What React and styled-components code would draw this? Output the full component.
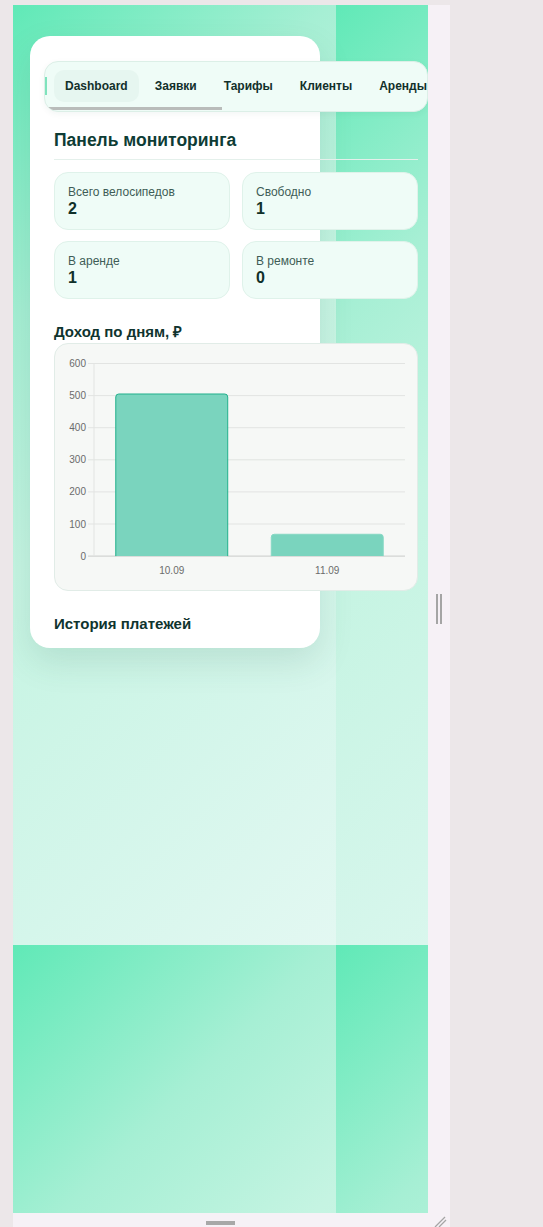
import * as React from 'react';
import styled, { createGlobalStyle } from 'styled-components';

const stats = [
    { label: 'Всего велосипедов', value: 2 },
    { label: 'Свободно', value: 1 },
    { label: 'В аренде', value: 1 },
    { label: 'В ремонте', value: 0 },
];

const tabs = ['Dashboard', 'Заявки', 'Тарифы', 'Клиенты', 'Аренды'];

const income = [
    { day: '10.09', sum: 505 },
    { day: '11.09', sum: 68 },
];

function IncomeChart() {
    const top = 19.5;
    const step = 32.1;
    const zero = top + step * 6;
    const left = 39;
    const right = 350;
    const slot = (right - left) / income.length;
    const barW = slot * 0.72;

    return (
        <svg width="362" height="246" viewBox="0 0 362 246">
            {[600, 500, 400, 300, 200, 100, 0].map((v, i) => {
                const y = top + step * i;
                return (
                    <g key={v}>
                        <line x1="33" x2={right} y1={y} y2={y} stroke={v === 0 ? '#c9cbc9' : '#e2e4e2'} strokeWidth="1" />
                        <text x="31" y={y + 3.5} textAnchor="end" fontSize="10" fill="#6b6b6b" fontFamily="'Liberation Sans', Arial, sans-serif">{v}</text>
                    </g>
                );
            })}
            <line x1={left} x2={left} y1={top} y2={zero} stroke="#e2e4e2" strokeWidth="1" />
            {income.map((d, i) => {
                const cx = left + slot * i + slot / 2;
                const x0 = cx - barW / 2;
                const x1 = cx + barW / 2;
                const y = zero - (d.sum / 100) * step;
                return (
                    <g key={d.day}>
                        <path
                            d={`M${x0},${zero} V${y + 3} Q${x0},${y} ${x0 + 3},${y} H${x1 - 3} Q${x1},${y} ${x1},${y + 3} V${zero}`}
                            fill="#7ad4be"
                            stroke={i === 0 ? '#22b08c' : '#86d8c4'}
                            strokeWidth="1"
                        />
                        <text x={cx} y="229.5" textAnchor="middle" fontSize="10" fill="#6b6b6b" fontFamily="'Liberation Sans', Arial, sans-serif">{d.day}</text>
                    </g>
                );
            })}
        </svg>
    );
}

export default function App() {
    return (
        <>
            <Global />
            <Page>
                <Device>
                    <Viewport>
                        <Card>
                            <Inner>
                                <TabBar>
                                    <TabRow>
                                        <Edge />
                                        {tabs.map((t, i) => (
                                            <Tab key={t} active={i === 0}>{t}</Tab>
                                        ))}
                                    </TabRow>
                                    <Thumb />
                                </TabBar>
                                <Section>
                                    <Title>Панель мониторинга</Title>
                                    <Stats>
                                        {stats.map((s) => (
                                            <Stat key={s.label}>
                                                <StatLabel>{s.label}</StatLabel>
                                                <StatValue>{s.value}</StatValue>
                                            </Stat>
                                        ))}
                                    </Stats>
                                    <SubTitle>Доход по дням, ₽</SubTitle>
                                    <ChartBox>
                                        <IncomeChart />
                                    </ChartBox>
                                    <SubTitle bottom>История платежей</SubTitle>
                                </Section>
                            </Inner>
                        </Card>
                    </Viewport>
                    <SideStrip>
                        <Grip vertical />
                    </SideStrip>
                    <BottomStrip>
                        <Grip />
                    </BottomStrip>
                    <Corner>
                        <svg width="22" height="14" viewBox="0 0 22 14">
                            <line x1="7" y1="14" x2="17" y2="4" stroke="#a5a5a5" strokeWidth="1.3" />
                            <line x1="11" y1="14" x2="18" y2="7" stroke="#a5a5a5" strokeWidth="1.3" />
                        </svg>
                    </Corner>
                </Device>
            </Page>
        </>
    );
}

//styling...

const Global = createGlobalStyle`
    html, body {
        margin: 0;
        padding: 0;
        background: #ece7e9;
        overflow: hidden;
    }
    body {
        font-family: 'Liberation Sans', Arial, sans-serif;
    }
`;

const Page = styled.div`
    width: 543px;
    height: 1227px;
    padding: 5px 0 0 13px;
    box-sizing: border-box;
    background: #ece7e9;
    overflow: hidden;
`;

const Device = styled.div`
    display: grid;
    grid-template-columns: 415px 22px;
    grid-template-rows: 1208px 14px;
`;

const Viewport = styled.div`
    overflow: hidden;
    background-image: linear-gradient(135deg, #60e9b7 0%, #a6efd4 25%, #c5f4e2 45%, #d5f6eb 75%, #e3f8f2 100%);
    background-size: 323px 940px;
    background-repeat: repeat;
`;

const SideStrip = styled.div`
    background: #f6f1f6;
    display: flex;
    align-items: center;
    justify-content: center;
`;

const BottomStrip = styled.div`
    background: #f6f1f6;
    display: flex;
    justify-content: center;
    padding-top: 8px;
    box-sizing: border-box;
`;

const Corner = styled.div`
    background: #f6f1f6;
    display: flex;
`;

const Grip = styled.div`
    ${(p) => (p.vertical
        ? `width: 6px; height: 30px; border-left: 2px solid #a5a5a5; border-right: 2px solid #a5a5a5;`
        : `width: 29px; height: 4px; border-top: 2px solid #a8a8a8; border-bottom: 2px solid #a8a8a8;`)}
    box-sizing: border-box;
`;

const Card = styled.div`
    width: 290px;
    margin: 31px 0 0 17px;
    padding: 25px 0 15px 14px;
    box-sizing: border-box;
    background: #ffffff;
    border-radius: 20px;
    box-shadow: 0 14px 34px rgba(30, 90, 70, 0.13);
`;

const Inner = styled.div`
    width: 384px;
`;

const TabBar = styled.div`
    background: #effcf7;
    border: 1px solid #dcefe7;
    border-radius: 14px;
    overflow: hidden;
    padding-bottom: 1px;
    box-shadow: 0 2px 6px rgba(20, 80, 60, 0.05);
`;

const TabRow = styled.div`
    display: flex;
    align-items: center;
    gap: 5px;
    padding-top: 8px;
    white-space: nowrap;
`;

const Edge = styled.div`
    width: 2px;
    height: 18px;
    margin: 0 2px 0 0;
    background: #7fe3bd;
    flex-shrink: 0;
`;

const Tab = styled.div`
    height: 32px;
    display: flex;
    align-items: center;
    padding: 0 11px;
    border-radius: 10px;
    font-size: 12px;
    font-weight: 700;
    color: #12302b;
    background: ${(p) => (p.active ? '#e6f6f0' : 'transparent')};
    flex-shrink: 0;
`;

const Thumb = styled.div`
    width: 176px;
    height: 3px;
    margin: 5px 0 0 1px;
    background: #b9bcba;
`;

const Section = styled.div`
    padding: 0 10px;
`;

const Title = styled.h2`
    margin: 0;
    padding: 18px 0 9px;
    font-size: 17.5px;
    line-height: 20px;
    font-weight: 700;
    color: #0e3c35;
    border-bottom: 1px solid #e4f0eb;
`;

const Stats = styled.div`
    display: grid;
    grid-template-columns: 1fr 1fr;
    gap: 11px 12px;
    margin-top: 12px;
`;

const Stat = styled.div`
    background: #effcf7;
    border: 1px solid #dff2ea;
    border-radius: 14px;
    padding: 12px 13px 8px;
    height: 58px;
    box-sizing: border-box;
`;

const StatLabel = styled.div`
    font-size: 12px;
    line-height: 15px;
    color: #3e5c56;
`;

const StatValue = styled.div`
    font-size: 16px;
    line-height: 18px;
    font-weight: 700;
    color: #10302a;
`;

const SubTitle = styled.h3`
    margin: ${(p) => (p.bottom ? '24px 0 0' : '24px 0 2px')};
    font-size: 15px;
    line-height: 18px;
    font-weight: 700;
    color: #0f342e;
`;

const ChartBox = styled.div`
    background: #f6f8f6;
    border: 1px solid #e1ece7;
    border-radius: 14px;
    height: 248px;
    box-sizing: border-box;
    display: flex;
`;
